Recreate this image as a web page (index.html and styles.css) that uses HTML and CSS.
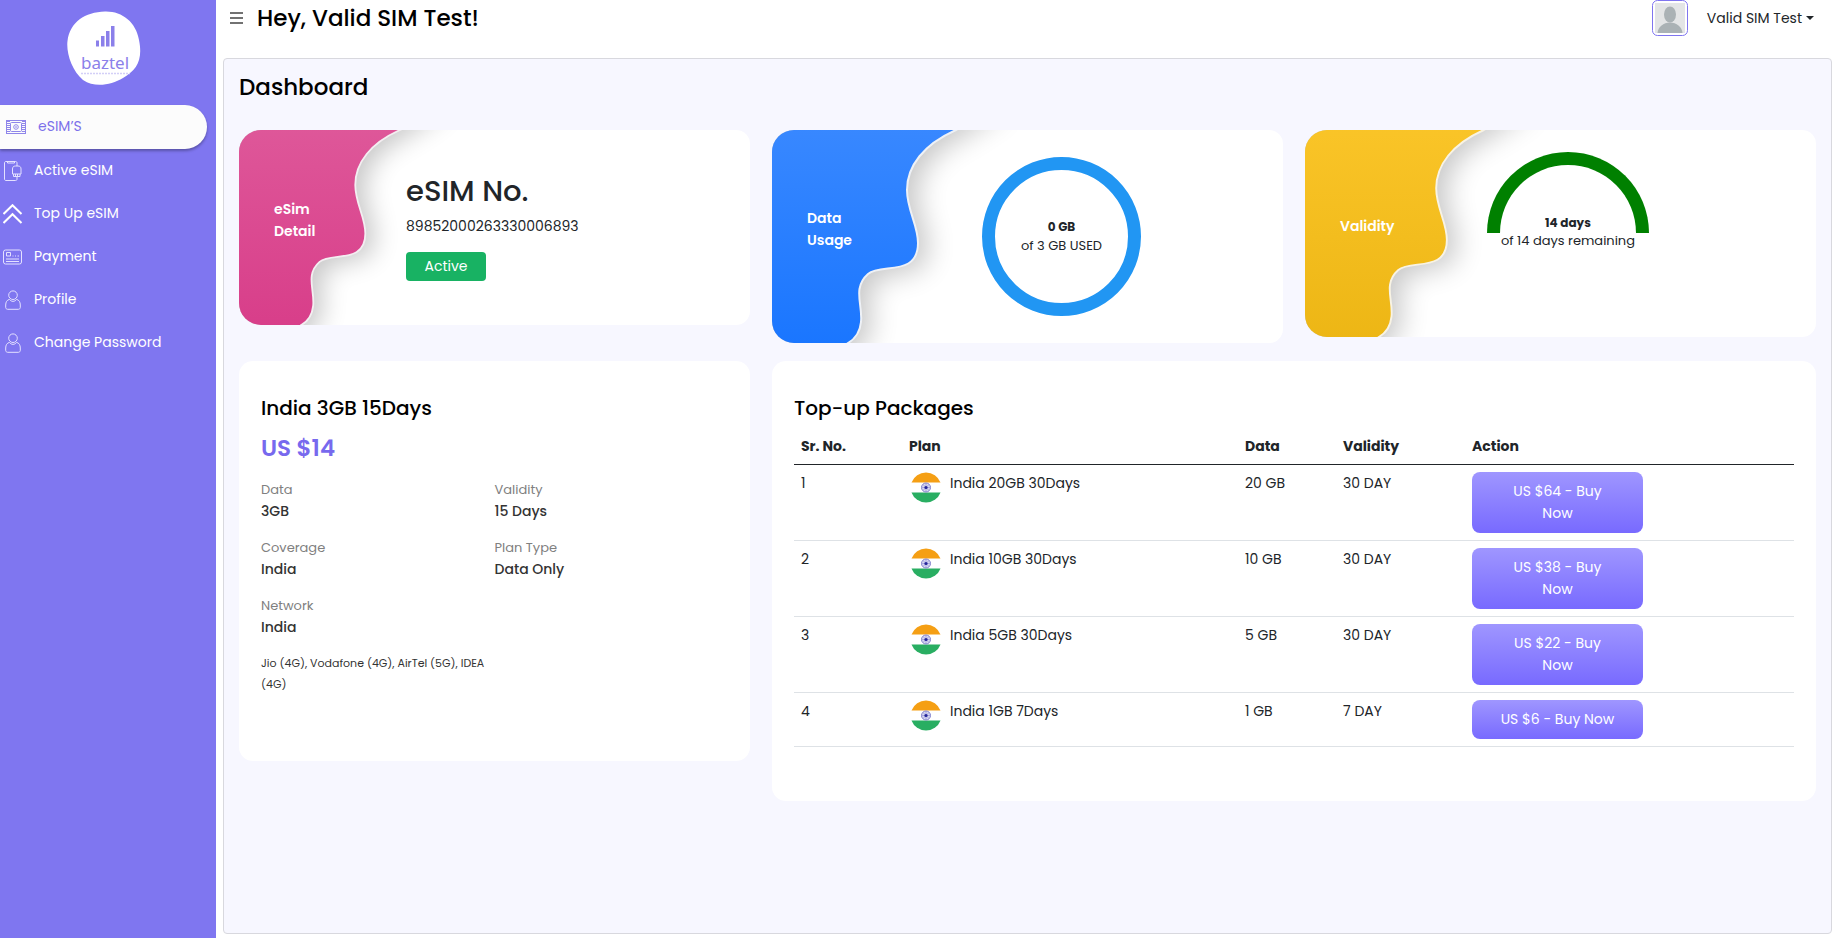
FILE: index.html
```
<!DOCTYPE html>
<html lang="en">
<head>
    <meta charset="UTF-8" />
    <meta name="viewport" content="width=device-width, initial-scale=1.0" />
    <title>Baztel - Dashboard</title>
    <link rel="stylesheet" href="styles.css">
</head>
<body>
    <!-- shared shapes -->
    <svg class="defs" width="0" height="0" aria-hidden="true">
        <defs>
            <linearGradient id="pink" x1="0" y1="0" x2="0" y2="1">
                <stop offset="0" stop-color="#df5a9b" />
                <stop offset="1" stop-color="#d73a87" />
            </linearGradient>
            <linearGradient id="blue" x1="0" y1="0" x2="0" y2="1">
                <stop offset="0" stop-color="#3c8aff" />
                <stop offset="1" stop-color="#1573ff" />
            </linearGradient>
            <linearGradient id="yellow" x1="0" y1="0" x2="0" y2="1">
                <stop offset="0" stop-color="#fbc62a" />
                <stop offset="1" stop-color="#ebb412" />
            </linearGradient>
            <filter id="soft" x="-20%" y="-20%" width="160%" height="140%">
                <feGaussianBlur stdDeviation="14" />
            </filter>
            <path id="wave" d="M-40 -30H230C200 -12 190 -3 184 0C152 14 135 36 135 60C135 80 146 95 146 113C146 147 109 133 96 144C80 158 91 175 89 192C88 202 83 209 76 213C66 222 50 240 40 250H-40Z" />
            <symbol id="user" viewBox="0 0 20 20">
                <circle cx="10" cy="5.2" r="4.3" />
                <path d="M6.4 9.4C4 10 2.700 12 2.700 15v2.400c0 1 .8 1.900 1.900 1.900h10.800c1 0 1.900-.8 1.900-1.900V15c0-3-1.300-5-3.700-5.600M6.400 9.400c2 2.600 5.200 2.600 7.200 0" />
            </symbol>
            <symbol id="flag" viewBox="0 0 30 31">
                <path d="M.5 10.500a15.500 15.500 0 0 1 29 0z" fill="#f59f14" />
                <path d="M.5 20.500a15.500 15.500 0 0 0 29 0z" fill="#29ae62" />
                <circle cx="15" cy="15.500" r="4.500" fill="#d9d9f2" stroke="#8080cc" />
                <path d="M15 11.500v8M11 15.500h8M12.200 12.700l5.600 5.600M17.800 12.700l-5.600 5.600" stroke="#8888cf" stroke-width=".6" />
                <circle cx="15" cy="15.500" r="1.600" fill="#25259a" />
            </symbol>
        </defs>
    </svg>

    <div class="wrapper">
        <aside class="sidebar">
            <a class="logo" href="#" aria-label="baztel">
                <svg width="74" height="75" viewBox="0 0 74 75">
                    <path d="M38 .5C55 0 69 11 72 29c4 20-2 30-16 38-12 7-28 10-40 2C5 60-1 42 .5 30 3 11 18 1 38 .5z" fill="#fff" />
                    <g fill="#8b80ea">
                        <rect x="29" y="29.500" width="3" height="6" />
                        <rect x="34" y="25" width="3.500" height="10.500" />
                        <rect x="39" y="20" width="3.500" height="15.500" />
                        <rect x="44" y="15" width="3.500" height="20.500" />
                    </g>
                    <text x="14" y="58" class="logo-name">baztel</text>
                    <path d="M14 62.500h49" stroke="#d3cff7" stroke-width="1.500" stroke-dasharray="2 1" />
                </svg>
            </a>
            <nav>
                <a class="nav-link active" href="#">
                    <svg width="20" height="14" viewBox="0 0 20 14">
                        <rect x=".5" y=".5" width="19" height="13" />
                        <path d="M2.500 1v12M17.500 1v12" stroke-dasharray="1 1" stroke-width="3" />
                        <rect x="4.500" y="2.500" width="11" height="9" rx="1" />
                        <circle cx="10" cy="7" r="2.300" />
                        <path d="M9 7h2" />
                    </svg>
                    <span>eSIM’S</span>
                </a>
                <a class="nav-link" href="#">
                    <svg width="20" height="20" viewBox="0 0 20 20">
                        <path d="M14 5V2c0-1-.5-1.500-1.500-1.500H3C2 .5 1.500 1 1.500 2v16c0 1 .5 1.500 1.500 1.500h9.500c1 0 1.500-.5 1.500-1.500v-2M4.500 1v1h7V1" />
                        <path d="M9.500 13V8c0-2 1-3 3-3h2.500c2 0 3 1 3 3v5zM10.500 13v2.500h6.500V13M12.500 13v2.500M14.500 13v2.500" />
                    </svg>
                    <span>Active eSIM</span>
                </a>
                <a class="nav-link" href="#">
                    <svg class="bold" width="20" height="20" viewBox="0 0 20 20">
                        <path d="M.5 10L9.500 1.200 18.500 10M.5 19l9-8.800 9 8.800" />
                    </svg>
                    <span>Top Up eSIM</span>
                </a>
                <a class="nav-link" href="#">
                    <svg width="20" height="16" viewBox="0 0 20 16">
                        <rect x=".5" y="1" width="18" height="14" rx="2" />
                        <path d="M3.500 3.500h4v3.500h-4zM9.500 7h1M12 7h1M14.500 7h1.500M3 10h13M3 12.500h13" />
                    </svg>
                    <span>Payment</span>
                </a>
                <a class="nav-link" href="#">
                    <svg width="20" height="20"><use href="#user" /></svg>
                    <span>Profile</span>
                </a>
                <a class="nav-link" href="#">
                    <svg width="20" height="20"><use href="#user" /></svg>
                    <span>Change Password</span>
                </a>
            </nav>
        </aside>

        <main class="main">
            <header class="topbar">
                <button class="menu-btn" type="button" aria-label="Toggle menu">
                    <svg width="13" height="12" viewBox="0 0 13 12">
                        <path d="M0 1h13M0 6h13M0 11h13" stroke="#444" stroke-width="1.500" />
                    </svg>
                </button>
                <h1>Hey, Valid SIM Test!</h1>
                <svg class="avatar" width="36" height="36" viewBox="0 0 36 36">
                    <rect x=".5" y=".5" width="35" height="35" rx="5" fill="#fff" stroke="#7f75ef" />
                    <rect x="3" y="3" width="30" height="30" fill="#e3e5e6" />
                    <ellipse cx="18" cy="14.500" rx="6" ry="8" fill="#aab2b5" />
                    <path d="M5.500 33c.5-6 6-10.500 12.500-10.500S30 27 30.500 33z" fill="#aab2b5" />
                </svg>
                <button class="user-btn" type="button">Valid SIM Test</button>
            </header>

            <section class="panel">
                <h2>Dashboard</h2>
                <div class="cards">
                    <div class="card stat stat-esim">
                        <svg class="wave" viewBox="8 0 327 213" preserveAspectRatio="xMinYMin slice">
                            <use href="#wave" x="10" y="5" filter="url(#soft)" opacity=".22" />
                            <use href="#wave" fill="url(#pink)" stroke="#f3eef1" stroke-width="2" />
                        </svg>
                        <h3>eSim<br>Detail</h3>
                        <div class="esim-info">
                            <h4>eSIM No.</h4>
                            <p>89852000263330006893</p>
                            <button class="status" type="button">Active</button>
                        </div>
                    </div>

                    <div class="card stat stat-data">
                        <svg class="wave" viewBox="0 0 335 213" preserveAspectRatio="xMinYMin slice">
                            <use href="#wave" x="10" y="5" filter="url(#soft)" opacity=".22" />
                            <use href="#wave" fill="url(#blue)" stroke="#eef1f6" stroke-width="2" />
                        </svg>
                        <h3>Data<br>Usage</h3>
                        <div class="ring">
                            <strong>0 GB</strong>
                            <span>of 3 GB USED</span>
                        </div>
                    </div>

                    <div class="card stat stat-validity">
                        <svg class="wave" viewBox="0 0 335 213" preserveAspectRatio="xMinYMin slice">
                            <use href="#wave" x="10" y="5" filter="url(#soft)" opacity=".22" />
                            <use href="#wave" fill="url(#yellow)" stroke="#f8f3e4" stroke-width="2" />
                        </svg>
                        <h3>Validity</h3>
                        <div class="gauge">
                            <strong>14 days</strong>
                            <span>of 14 days remaining</span>
                        </div>
                    </div>

                    <div class="card plan">
                        <h3>India 3GB 15Days</h3>
                        <p class="price">US $14</p>
                        <dl>
                            <div><dt>Data</dt><dd>3GB</dd></div>
                            <div><dt>Validity</dt><dd>15 Days</dd></div>
                            <div><dt>Coverage</dt><dd>India</dd></div>
                            <div><dt>Plan Type</dt><dd>Data Only</dd></div>
                            <div>
                                <dt>Network</dt>
                                <dd>India</dd>
                                <dd class="operators">Jio (4G), Vodafone (4G), AirTel (5G), IDEA (4G)</dd>
                            </div>
                        </dl>
                    </div>

                    <div class="card packages">
                        <h3>Top-up Packages</h3>
                        <table>
                            <thead>
                                <tr>
                                    <th class="col-no">Sr. No.</th>
                                    <th class="col-plan">Plan</th>
                                    <th class="col-data">Data</th>
                                    <th class="col-validity">Validity</th>
                                    <th>Action</th>
                                </tr>
                            </thead>
                            <tbody>
                                <tr>
                                    <td>1</td>
                                    <td><div class="plan-name"><svg width="30" height="31"><use href="#flag" /></svg>India 20GB 30Days</div></td>
                                    <td>20 GB</td>
                                    <td>30 DAY</td>
                                    <td><button class="buy" type="button">US $64 - Buy Now</button></td>
                                </tr>
                                <tr>
                                    <td>2</td>
                                    <td><div class="plan-name"><svg width="30" height="31"><use href="#flag" /></svg>India 10GB 30Days</div></td>
                                    <td>10 GB</td>
                                    <td>30 DAY</td>
                                    <td><button class="buy" type="button">US $38 - Buy Now</button></td>
                                </tr>
                                <tr>
                                    <td>3</td>
                                    <td><div class="plan-name"><svg width="30" height="31"><use href="#flag" /></svg>India 5GB 30Days</div></td>
                                    <td>5 GB</td>
                                    <td>30 DAY</td>
                                    <td><button class="buy" type="button">US $22 - Buy Now</button></td>
                                </tr>
                                <tr>
                                    <td>4</td>
                                    <td><div class="plan-name"><svg width="30" height="31"><use href="#flag" /></svg>India 1GB 7Days</div></td>
                                    <td>1 GB</td>
                                    <td>7 DAY</td>
                                    <td><button class="buy" type="button">US $6 - Buy Now</button></td>
                                </tr>
                            </tbody>
                        </table>
                    </div>
                </div>
            </section>
        </main>
    </div>
</body>
</html>
```
FILE: styles.css
```
* {
    box-sizing: border-box;
}

body {
    margin: 0;
    font-family: Poppins, Inter, sans-serif;
    font-size: 14px;
    line-height: 22px;
    color: #212529;
    background: #fff;
}

h1, h2, h3, h4, p, dl, dd {
    margin: 0;
}

button {
    font: inherit;
    border: none;
    cursor: pointer;
}

.defs {
    position: absolute;
}

.wrapper {
    display: flex;
    min-height: 100vh;
}

/* sidebar */
.sidebar {
    flex: 0 0 216px;
    background: #7f76f0;
}

.logo {
    display: block;
    height: 105px;
    padding: 11px 0 0 67px;
}

.logo-name {
    font-family: "Noto Sans", sans-serif;
    font-size: 17px;
    fill: #8b80ea;
}

.nav-link {
    display: flex;
    align-items: center;
    height: 43px;
    padding-left: 3px;
    gap: 11px;
    color: #fff;
    text-decoration: none;
}

.nav-link svg {
    fill: none;
    stroke: #e4e1ff;
    stroke-width: 1;
}

.nav-link svg.bold {
    stroke: #fff;
    stroke-width: 2;
}

.nav-link span {
    padding-bottom: 2px;
}

.nav-link.active {
    height: 44px;
    margin-right: 9px;
    padding-left: 6px;
    gap: 12px;
    color: #7c70ea;
    background: #fcfcfc;
    border-radius: 0 22px 22px 0;
    box-shadow: 0 2px 3px rgba(0, 0, 0, 0.3);
}

.nav-link.active svg {
    stroke: #8f86ea;
}

/* top bar */
.main {
    flex: 1;
    display: flex;
    flex-direction: column;
    min-width: 0;
    padding: 0 6px 4px 7px;
}

.topbar {
    display: flex;
    align-items: center;
    height: 36px;
    margin-bottom: 22px;
    padding: 0 18px 0 7px;
}

.menu-btn {
    display: flex;
    padding: 0;
    margin-right: 14px;
    background: none;
}

h1, h2 {
    font-size: 23px;
    font-weight: 500;
    line-height: 28px;
    color: #000;
}

.avatar {
    margin-left: auto;
    margin-right: 19px;
}

.user-btn {
    display: flex;
    align-items: center;
    gap: 4px;
    padding: 0;
    background: none;
    color: #212529;
}

.user-btn::after {
    content: "";
    border-top: 4px solid;
    border-left: 4px solid transparent;
    border-right: 4px solid transparent;
}

/* dashboard panel */
.panel {
    flex: 1;
    padding: 14px 15px;
    background: #f7f7ff;
    border: 1px solid #d8d8de;
    border-radius: 4px;
}

.cards {
    display: grid;
    grid-template-columns: repeat(3, 1fr);
    gap: 18px 22px;
    align-items: start;
    margin-top: 29px;
}

.card {
    background: #fff;
    border-radius: 14px;
}

.stat {
    position: relative;
    display: flex;
    overflow: hidden;
    border-radius: 22px 14px 14px 22px;
}

.wave {
    position: absolute;
    top: 0;
    left: 0;
    height: 100%;
}

.stat h3 {
    position: relative;
    align-self: center;
    flex: 0 0 auto;
    padding: 0 0 16px 35px;
    font-size: 14px;
    font-weight: 600;
    line-height: 22px;
    color: #fff;
}

.stat-esim h3 {
    width: 167px;
}

.stat-data h3 {
    width: 210px;
}

.stat-validity h3 {
    width: 182px;
}

.esim-info {
    position: relative;
    padding: 44px 0;
}

.esim-info h4 {
    font-size: 29px;
    font-weight: 500;
    line-height: 34px;
}

.esim-info p {
    margin: 7px 0 15px;
}

.status {
    display: block;
    width: 80px;
    height: 29px;
    padding: 0 0 2px;
    color: #fff;
    background: #18b263;
    border-radius: 4px;
}

.stat-data {
    padding: 27px 0;
}

.ring {
    position: relative;
    display: flex;
    flex-direction: column;
    align-items: center;
    justify-content: center;
    width: 159px;
    height: 159px;
    padding-bottom: 2px;
    border: 13px solid #2196f3;
    border-radius: 50%;
    font-size: 13px;
    line-height: 19px;
}

.stat-validity {
    height: 207px;
}

.gauge {
    position: relative;
    display: flex;
    flex-direction: column;
    align-items: center;
    width: 162px;
    height: 81px;
    margin-top: 22px;
    padding-top: 49px;
    border: 13px solid #008000;
    border-bottom: none;
    border-radius: 81px 81px 0 0;
    font-size: 13px;
    line-height: 18px;
    white-space: nowrap;
}

.ring strong,
.gauge strong {
    font-size: 12px;
    font-weight: 700;
}

/* current plan */
.plan {
    min-height: 400px;
    padding: 35px 22px;
}

.plan h3,
.packages h3 {
    font-size: 20px;
    font-weight: 500;
    line-height: 24px;
    color: #000;
}

.price {
    margin: 14px 0 18px;
    font-size: 23px;
    font-weight: 600;
    line-height: 28px;
    color: #7769ee;
}

.plan dl {
    display: grid;
    grid-template-columns: 1fr 1fr;
    gap: 16px 0;
}

.plan dt {
    font-size: 13px;
    line-height: 20px;
    color: #808080;
}

.plan dd {
    font-weight: 500;
    color: #333;
}

.plan dd.operators {
    margin-top: 15px;
    font-size: 11px;
    font-weight: 400;
    line-height: 21px;
}

/* top-up table */
.packages {
    grid-column: span 2;
    min-height: 440px;
    padding: 35px 22px;
}

table {
    width: 100%;
    margin-top: 8px;
    border-collapse: collapse;
    table-layout: fixed;
}

th, td {
    padding: 7px;
    text-align: left;
    vertical-align: top;
    border-bottom: 1px solid #dee2e6;
}

th {
    font-weight: 700;
    border-bottom-color: #212529;
}

.col-no {
    width: 10.8%;
}

.col-plan {
    width: 33.6%;
}

.col-data {
    width: 9.8%;
}

.col-validity {
    width: 12.9%;
}

.plan-name {
    display: flex;
    gap: 9px;
    padding-left: 2px;
}

.buy {
    display: block;
    width: 171px;
    padding: 8px 26px 9px;
    color: #fff;
    background: linear-gradient(#9f96ff, #786aff);
    border-radius: 8px;
}
```
